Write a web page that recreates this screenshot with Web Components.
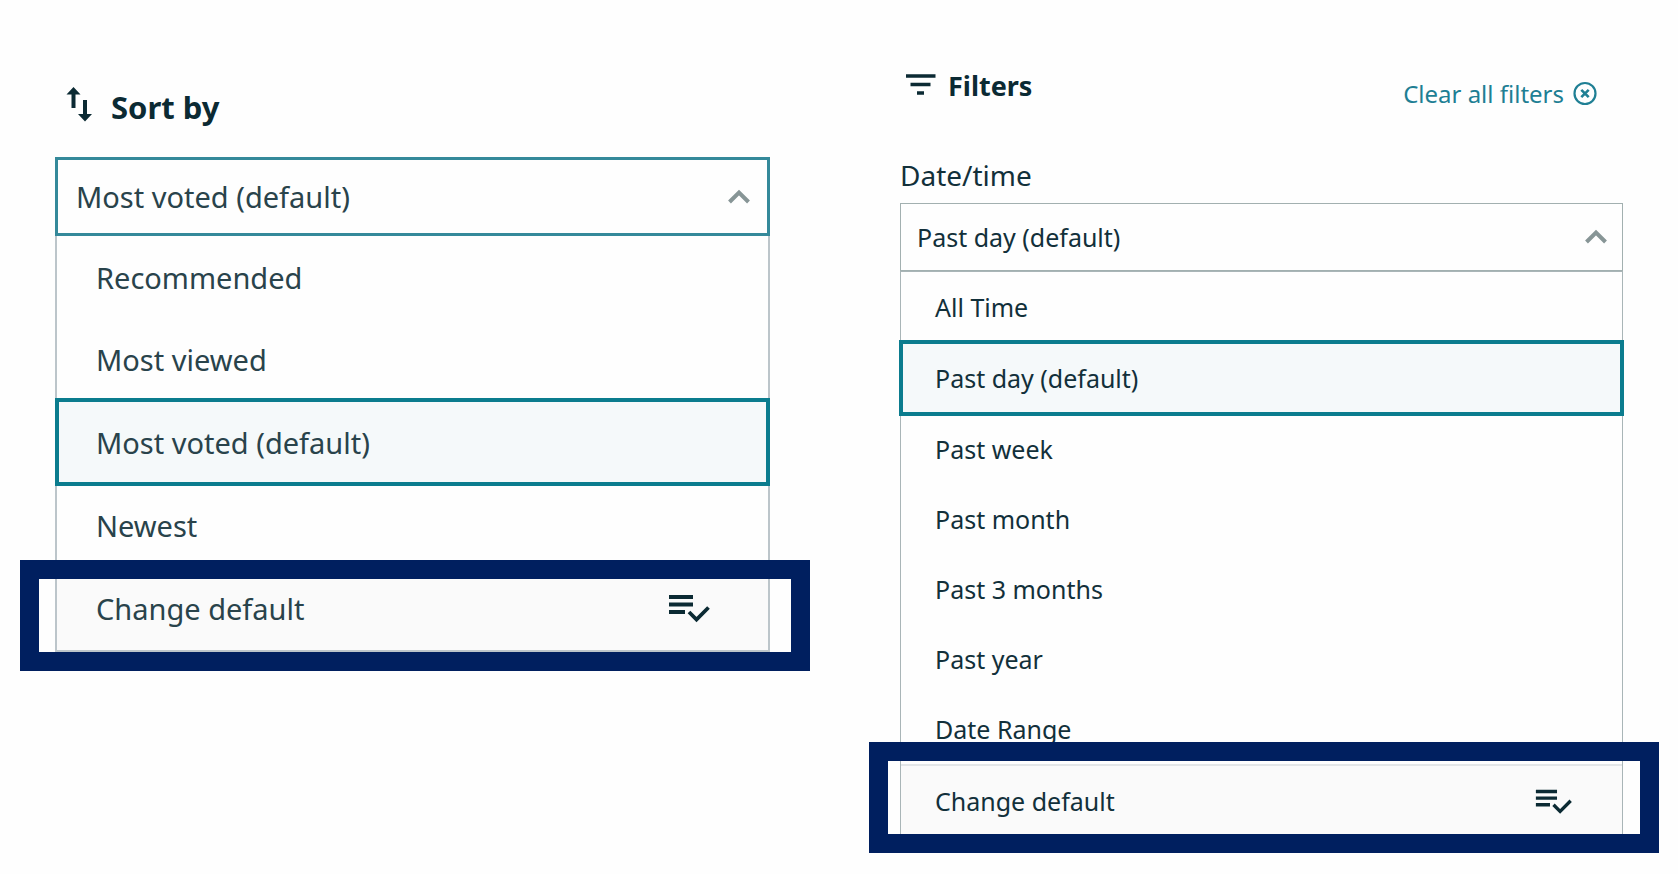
<!DOCTYPE html>
<html lang="en">
<head>
<meta charset="utf-8">
<meta name="viewport" content="width=device-width, initial-scale=1">
<title>Sort and filter</title>
<style>
  body {
    margin: 0;
    background: #fefefe;
    color: #12303a;
    font-family: "Noto Sans", "Open Sans", sans-serif;
  }

  main {
    display: grid;
    grid-template-columns: 715fr 723fr;
    align-items: start;
    gap: 130px;
    padding: 70px 55px 24px;
  }

  .sort {
    --text: 29px;
    --row: 82px;
    --trigger: 79px;
    --trigger-pad: 18px;
    --arrow-space: 19px;
    --line: 2px;
    --top-line: 0;
    --line-color: #bcc5ca;
    --trigger-line: 3px;
    --trigger-color: #35899a;
    --indent: 39px;
    --icon-space: 58px;
    --icon-size: 42px;
    --frame: -6px -42px -21px -37px;
    color: #29434b;
    padding-top: 17px;
  }

  .filters {
    --text: 25px;
    --row: 70px;
    --trigger: 68px;
    --trigger-pad: 16px;
    --arrow-space: 15px;
    --line: 1px;
    --top-line: 1px;
    --line-color: #a9b5b7;
    --trigger-line: 1px;
    --trigger-color: #a2b0b0;
    --indent: 34px;
    --icon-space: 50px;
    --icon-size: 37px;
    --frame: -24px -37px -17px -32px;
  }
</style>
</head>
<body>
<main>
  <filter-panel class="sort" style="--title: 31px; --title-line: 40px; --head: 40px; --after: 30px">
    <svg slot="icon" width="48" height="40" viewBox="0 0 48 40" fill="none" stroke="#0b2a33" stroke-width="4">
      <path d="M18.500 21V6M30 13v16"/>
      <path d="M18.500 0l7 7.500h-14zM30 34.500l-7-7.500h14z" fill="#0b2a33" stroke="none"/>
    </svg>
    <span slot="title">Sort by</span>
    <option-menu name="Sort by" value="Most voted (default)">
      <menu-option>Recommended</menu-option>
      <menu-option>Most viewed</menu-option>
      <menu-option selected style="--row: 84px">Most voted (default)</menu-option>
      <menu-option>Newest</menu-option>
      <menu-option action style="--row: 84px">Change default</menu-option>
    </option-menu>
  </filter-panel>

  <filter-panel class="filters" style="--title: 27px; --title-line: 32px; --head: 40px; --after: 49px">
    <svg slot="icon" width="40" height="32" viewBox="0 0 40 32" fill="none" stroke="#0b2a33" stroke-width="3.500">
      <path d="M6 6h29.500M10.500 14.500h20M17 23h7"/>
    </svg>
    <span slot="title">Filters</span>
    <clear-link slot="action">Clear all filters</clear-link>
    <option-menu name="Date/time" value="Past day (default)" labelled>
      <menu-option>All Time</menu-option>
      <menu-option selected style="--row: 72px">Past day (default)</menu-option>
      <menu-option>Past week</menu-option>
      <menu-option>Past month</menu-option>
      <menu-option>Past 3 months</menu-option>
      <menu-option>Past year</menu-option>
      <menu-option>Date Range</menu-option>
      <menu-option action divided>Change default</menu-option>
    </option-menu>
  </filter-panel>
</main>

<script>
class FilterPanel extends HTMLElement {
  constructor() {
    super();
    this.attachShadow({ mode: "open" });
    this.shadowRoot.innerHTML = `
      <style>
        :host {
          display: block;
          min-width: 0;
        }

        header {
          display: flex;
          justify-content: space-between;
          min-height: var(--head);
          margin-bottom: var(--after);
        }

        h2 {
          display: flex;
          align-self: flex-start;
          align-items: center;
          gap: 8px;
          margin: 0;
          color: #0b2a33;
          font-size: var(--title);
          line-height: var(--title-line);
          font-weight: 700;
        }

        ::slotted([slot="action"]) {
          align-self: flex-end;
        }
      </style>
      <header>
        <h2><slot name="icon"></slot><slot name="title"></slot></h2>
        <slot name="action"></slot>
      </header>
      <slot></slot>
    `;
  }
}

class ClearLink extends HTMLElement {
  constructor() {
    super();
    this.attachShadow({ mode: "open" });
    this.shadowRoot.innerHTML = `
      <style>
        :host {
          display: block;
          margin-right: 25px;
        }

        a {
          display: flex;
          align-items: center;
          gap: 8px;
          color: #1f7f94;
          font-size: 24px;
          line-height: 32px;
          text-decoration: none;
          white-space: nowrap;
        }
      </style>
      <a href="#clear">
        <slot></slot>
        <svg width="26" height="26" viewBox="0 0 26 26" fill="none" stroke="currentColor">
          <circle cx="13" cy="12.500" r="10.500" stroke-width="2.200"/>
          <path d="M9.300 8.800l7.400 7.400M16.700 8.800l-7.400 7.400" stroke-width="2.600"/>
        </svg>
      </a>
    `;
  }
}

class MenuOption extends HTMLElement {
  constructor() {
    super();
    this.attachShadow({ mode: "open" });
    this.shadowRoot.innerHTML = `
      <style>
        :host {
          display: block;
          position: relative;
        }

        button {
          display: flex;
          align-items: center;
          justify-content: space-between;
          box-sizing: border-box;
          width: 100%;
          height: var(--row);
          padding: 0 var(--icon-space) 0 var(--indent);
          border: 0;
          background: none;
          color: inherit;
          font: inherit;
          text-align: left;
          cursor: pointer;
        }

        svg {
          display: none;
          width: var(--icon-size);
        }

        :host([selected]) {
          z-index: 1;
        }

        :host([selected]) button {
          background: #f5f9fa;
          outline: 4px solid #0b7c8e;
          outline-offset: -2px;
        }

        :host([action]) button {
          background: #fafafa;
        }

        :host([action]) svg {
          display: block;
        }

        :host([divided]) {
          border-top: 2px solid #e3e6e8;
        }

        /* highlight drawn around the last row */
        :host([action])::after {
          content: "";
          position: absolute;
          z-index: 2;
          inset: var(--frame);
          border: 19px solid #001f5f;
          pointer-events: none;
        }
      </style>
      <button type="button">
        <slot></slot>
        <svg viewBox="0 0 42 30" fill="none" stroke="#0b2a33" stroke-width="3.800" aria-hidden="true">
          <path d="M1 4h24M1 11.500h24M1 19h16M21 19l7.500 7.500 12-12"/>
        </svg>
      </button>
    `;
  }
}

class OptionMenu extends HTMLElement {
  constructor() {
    super();
    this.attachShadow({ mode: "open" });
    this.shadowRoot.innerHTML = `
      <style>
        :host {
          display: block;
          font-size: var(--text);
        }

        label {
          display: none;
          margin-bottom: 12px;
          font-size: 28px;
          line-height: 32px;
        }

        :host([labelled]) label {
          display: block;
        }

        .trigger {
          display: grid;
          align-items: center;
        }

        select,
        svg {
          grid-area: 1 / 1;
        }

        select {
          appearance: none;
          box-sizing: border-box;
          width: 100%;
          height: var(--trigger);
          padding: 0 60px 0 var(--trigger-pad);
          border: var(--trigger-line) solid var(--trigger-color);
          border-radius: 0;
          outline: 0;
          background: #fefefe;
          color: inherit;
          font: inherit;
        }

        svg {
          justify-self: end;
          margin-right: var(--arrow-space);
          pointer-events: none;
        }

        .list {
          border: var(--line) solid var(--line-color);
          border-top-width: var(--top-line);
        }

        :host([closed]) .list {
          display: none;
        }
      </style>
      <label for="pick"></label>
      <div class="trigger">
        <select id="pick"></select>
        <svg width="24" height="24" viewBox="0 0 24 24" fill="none" stroke="#879596" stroke-width="4" aria-hidden="true">
          <path d="M2.500 17l9.500-9.500 9.500 9.500"/>
        </svg>
      </div>
      <div class="list"><slot></slot></div>
    `;
    this.select = this.shadowRoot.querySelector("select");
  }

  connectedCallback() {
    let name = this.getAttribute("name");
    this.shadowRoot.querySelector("label").textContent = name;
    this.select.setAttribute("aria-label", name);
    this.setValue(this.getAttribute("value"));

    this.select.addEventListener("mousedown", (e) => {
      e.preventDefault();
      this.toggleAttribute("closed");
    });

    this.addEventListener("click", (e) => {
      let item = e.target.closest("menu-option");
      if (!item || item.hasAttribute("action")) return;

      this.querySelectorAll("menu-option").forEach((el) =>
        el.toggleAttribute("selected", el === item)
      );
      this.setValue(item.textContent);
    });
  }

  setValue(value) {
    this.select.replaceChildren(new Option(value));
  }
}

customElements.define("filter-panel", FilterPanel);
customElements.define("clear-link", ClearLink);
customElements.define("menu-option", MenuOption);
customElements.define("option-menu", OptionMenu);
</script>
</body>
</html>
